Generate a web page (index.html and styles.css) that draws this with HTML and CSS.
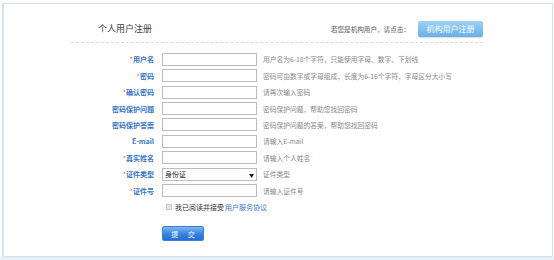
FILE: index.html
```html
<!DOCTYPE html>
<html lang="zh-CN">
<head>
  <meta charset="UTF-8">
  <title>个人用户注册</title>
  <link rel="stylesheet" href="styles.css">
</head>
<body>
  <div class="frame">
    <div class="panel">
      <div class="header">
        <h1 class="title">个人用户注册</h1>
        <div class="org">
          <span class="org-tip">若您是机构用户，请点击：</span>
          <a class="org-btn" href="#">机构用户注册</a>
        </div>
      </div>

      <form class="form">
        <div class="row">
          <label class="label"><span class="req">*</span>用户名</label>
          <input class="field" type="text">
          <span class="hint">用户名为6-18个字符，只能使用字母、数字、下划线</span>
        </div>
        <div class="row">
          <label class="label"><span class="req">*</span>密码</label>
          <input class="field" type="password">
          <span class="hint">密码可由数字或字母组成，长度为6-16个字符，字母区分大小写</span>
        </div>
        <div class="row">
          <label class="label"><span class="req">*</span>确认密码</label>
          <input class="field" type="password">
          <span class="hint">请再次输入密码</span>
        </div>
        <div class="row">
          <label class="label">密码保护问题</label>
          <input class="field" type="text">
          <span class="hint">密码保护问题，帮助您找回密码</span>
        </div>
        <div class="row">
          <label class="label">密码保护答案</label>
          <input class="field" type="text">
          <span class="hint">密码保护问题的答案，帮助您找回密码</span>
        </div>
        <div class="row">
          <label class="label">E-mail</label>
          <input class="field" type="text">
          <span class="hint">请输入E-mail</span>
        </div>
        <div class="row">
          <label class="label"><span class="req">*</span>真实姓名</label>
          <input class="field" type="text">
          <span class="hint">请输入个人姓名</span>
        </div>
        <div class="row">
          <label class="label"><span class="req">*</span>证件类型</label>
          <div class="select-wrap">
            <select class="field select">
              <option>身份证</option>
              <option>护照</option>
            </select>
            <span class="arrow">▼</span>
          </div>
          <span class="hint">证件类型</span>
        </div>
        <div class="row">
          <label class="label"><span class="req">*</span>证件号</label>
          <input class="field" type="text">
          <span class="hint">请输入证件号</span>
        </div>
        <div class="agree">
          <span class="check"></span>
          <span>我已阅读并接受</span>
          <a class="link" href="#">用户服务协议</a>
        </div>
        <div class="actions">
          <button class="submit" type="button">提 交</button>
        </div>
      </form>
    </div>
  </div>
  <div class="strip"></div>
</body>
</html>
```

FILE: styles.css
```css
html, body {
  margin: 0;
  padding: 0;
  background-color: #fff;
  font-family: "Noto Sans CJK SC", "Noto Sans", sans-serif;
  color: #333;
}
.frame {
  margin: 3px 1px 0 2px;
  height: 254px;
  border: 1px solid #d3e3ef;
  border-left-width: 2px;
  box-sizing: border-box;
  background-color: #fff;
}
.strip {
  height: 3px;
  background-color: #e6f0f8;
}
.panel {
  margin-left: 67px;
  width: 412px;
}
.header {
  display: flex;
  justify-content: space-between;
  align-items: center;
  padding: 17px 0 5px 27px;
  border-bottom: 1px dashed #dadada;
}
.title {
  margin: 0;
  font-size: 9px;
  font-weight: normal;
  color: #444;
  line-height: 16px;
}
.org {
  display: flex;
  align-items: center;
}
.org-tip {
  font-size: 6.6px;
  color: #555;
  margin-right: 8px;
}
.org-btn {
  display: block;
  width: 65px;
  height: 16px;
  line-height: 16px;
  text-align: center;
  font-size: 8px;
  color: #fff;
  text-decoration: none;
  border-radius: 2px;
  background: linear-gradient(#9fd0f4, #66b0ea);
  box-shadow: 0 1px 1px rgba(0,0,0,0.15);
}
.form {
  padding-top: 8px;
}
.row {
  display: grid;
  grid-template-columns: 85px 95px auto;
  column-gap: 6px;
  align-items: center;
  height: 16.45px;
}
.label {
  text-align: right;
  font-size: 7px;
  font-weight: bold;
  color: #3675c8;
  padding-right: 2px;
}
.req {
  color: #f26522;
  font-weight: normal;
}
.field {
  display: block;
  box-sizing: border-box;
  width: 95px;
  height: 13px;
  margin: 0;
  padding: 0 3px;
  border: 1px solid #bcbcbc;
  background-color: #fff;
  font-family: inherit;
  font-size: 7px;
  color: #222;
  outline: none;
}
.select-wrap {
  position: relative;
  width: 95px;
  height: 13px;
  font-size: 0;
}
.select {
  appearance: none;
  -webkit-appearance: none;
  border-radius: 0;
  padding: 0 2px;
  line-height: 11px;
}
.arrow {
  position: absolute;
  right: 3px;
  top: 3px;
  font-size: 5px;
  line-height: 7px;
  color: #111;
  pointer-events: none;
}
.hint {
  font-size: 6.75px;
  color: #888;
  white-space: nowrap;
}
.agree {
  display: flex;
  align-items: center;
  margin-left: 95px;
  height: 16px;
  font-size: 7px;
  color: #333;
}
.check {
  width: 4px;
  height: 4px;
  border: 1px solid #c8c8c8;
  background-color: #e4e4e4;
  margin-right: 3px;
}
.link {
  color: #3675c8;
  text-decoration: none;
  margin-left: 1px;
}
.actions {
  margin: 3px 0 0 91px;
}
.submit {
  width: 42px;
  height: 15px;
  padding: 0;
  border: 1px solid #3a7fd0;
  border-radius: 2px;
  background: linear-gradient(#7fb6f2, #3d86e4 50%, #226ed6);
  color: #fff;
  font-family: inherit;
  font-size: 7px;
  letter-spacing: 4px;
  text-indent: 4px;
  cursor: pointer;
}
```
